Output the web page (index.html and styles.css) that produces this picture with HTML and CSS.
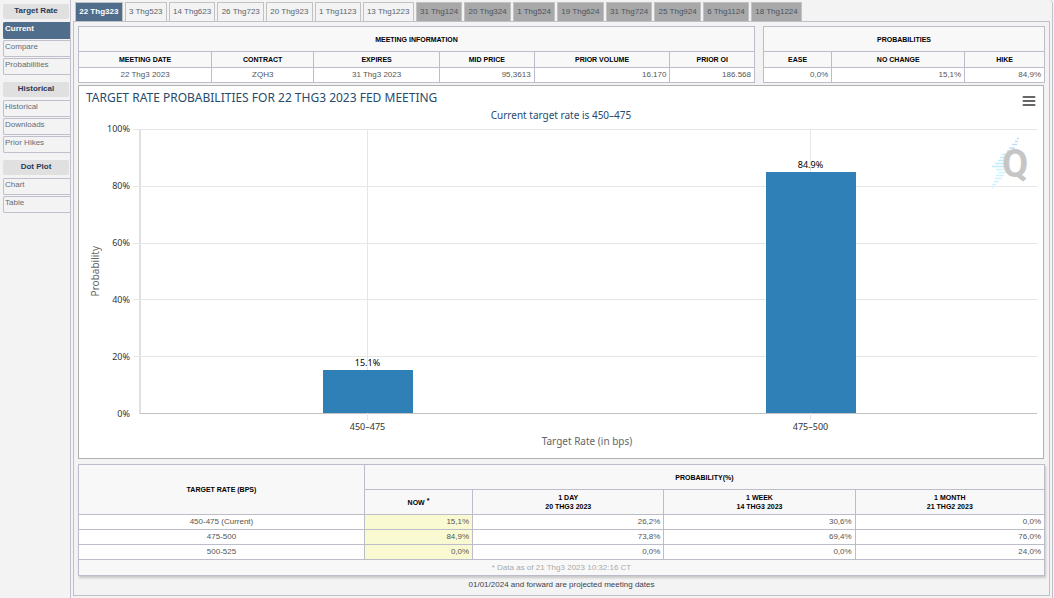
FILE: index.html
```html
<!DOCTYPE html>
<html lang="en">
<head>
<meta charset="utf-8">
<title>Target Rate Probabilities</title>
<link rel="stylesheet" href="styles.css">
</head>
<body>
<div class="app">
  <nav class="sidebar" aria-label="Sections">
    <section class="group">
      <h2 class="group-title">Target Rate</h2>
      <a class="item active" href="#current">Current</a>
      <a class="item" href="#compare">Compare</a>
      <a class="item" href="#probabilities">Probabilities</a>
    </section>
    <section class="group">
      <h2 class="group-title">Historical</h2>
      <a class="item" href="#historical">Historical</a>
      <a class="item" href="#downloads">Downloads</a>
      <a class="item" href="#hikes">Prior Hikes</a>
    </section>
    <section class="group">
      <h2 class="group-title">Dot Plot</h2>
      <a class="item" href="#chart">Chart</a>
      <a class="item" href="#table">Table</a>
    </section>
  </nav>
  <main class="main">
    <div class="tabs">
      <button class="tab active">22 Thg323</button>
      <button class="tab">3 Thg523</button>
      <button class="tab">14 Thg623</button>
      <button class="tab">26 Thg723</button>
      <button class="tab">20 Thg923</button>
      <button class="tab">1 Thg1123</button>
      <button class="tab">13 Thg1223</button>
      <button class="tab projected">31 Thg124</button>
      <button class="tab projected">20 Thg324</button>
      <button class="tab projected">1 Thg524</button>
      <button class="tab projected">19 Thg624</button>
      <button class="tab projected">31 Thg724</button>
      <button class="tab projected">25 Thg924</button>
      <button class="tab projected">6 Thg1124</button>
      <button class="tab projected">18 Thg1224</button>
    </div>
    <div class="panel">
      <div class="summary">
        <table class="grid info">
          <colgroup><col class="info-date"><col class="info-contract"><col class="info-expires"><col class="info-price"><col class="info-volume"><col></colgroup>
          <thead>
            <tr class="tall"><th colspan="6">MEETING INFORMATION</th></tr>
            <tr><th>MEETING DATE</th><th>CONTRACT</th><th>EXPIRES</th><th>MID PRICE</th><th>PRIOR VOLUME</th><th>PRIOR OI</th></tr>
          </thead>
          <tbody>
            <tr><td>22 Thg3 2023</td><td>ZQH3</td><td>31 Thg3 2023</td><td class="num">95,3613</td><td class="num">16.170</td><td class="num">186.568</td></tr>
          </tbody>
        </table>
        <table class="grid odds">
          <colgroup><col class="odds-ease"><col class="odds-same"><col></colgroup>
          <thead>
            <tr class="tall"><th colspan="3">PROBABILITIES</th></tr>
            <tr><th>EASE</th><th>NO CHANGE</th><th>HIKE</th></tr>
          </thead>
          <tbody>
            <tr><td class="num">0,0%</td><td class="num">15,1%</td><td class="num">84,9%</td></tr>
          </tbody>
        </table>
      </div>

      <section class="chart">
        <header class="chart-head">
          <h1 class="chart-title">TARGET RATE PROBABILITIES FOR 22 THG3 2023 FED MEETING</h1>
          <button class="menu" aria-label="Chart menu">
            <svg width="14" height="12" viewBox="0 0 14 12" aria-hidden="true"><path d="M1.5 2h11M1.500 6h11M1.500 10h11" stroke="#666" stroke-width="2" stroke-linecap="round"/></svg>
          </button>
        </header>
        <p class="subtitle">Current target rate is 450–475</p>
        <div class="chart-body">
          <div class="y-title">Probability</div>
          <ul class="y-ticks"><li>100%</li><li>80%</li><li>60%</li><li>40%</li><li>20%</li><li>0%</li></ul>
          <div class="plot">
            <div class="lines"><i></i><i></i><i></i><i></i><i></i></div>
            <div class="columns">
              <div class="column"><span class="value">15.1%</span><div class="bar" style="height:15.1%"></div></div>
              <div class="column"><span class="value">84.9%</span><div class="bar" style="height:84.9%"></div></div>
            </div>
            <svg class="logo" width="38" height="52" viewBox="0 0 38 52" aria-hidden="true">
              <g stroke-width="1.500" fill="none">
                <path stroke="#c0dcf5" d="M26 1.500h2M24 4.500h3M21 7.500h5M18 11h6M16 14h6"/>
                <path stroke="#c4eafc" d="M11 17.500h6M9 20.500h6M7 23.500h7M4 26.500h9M1 29.500h12"/>
                <path stroke="#cff3fc" d="M5 32.500h8M7 35.500h7M5 38.500h8M4 41.500h7M3 44.500h5M1 47.500h4M1 50.500h1"/>
              </g>
              <text class="logo-letter" x="11" y="40">Q</text>
            </svg>
          </div>
          <div class="x-labels"><span>450–475</span><span>475–500</span></div>
          <div class="x-title">Target Rate (in bps)</div>
        </div>
      </section>

      <table class="grid history">
        <colgroup><col class="hist-rate"><col class="hist-now"><col class="hist-past"><col class="hist-past"><col></colgroup>
        <thead>
          <tr class="tall"><th rowspan="2">TARGET RATE (BPS)</th><th colspan="4">PROBABILITY(%)</th></tr>
          <tr class="tall"><th>NOW <sup>*</sup></th><th>1 DAY<br>20 THG3 2023</th><th>1 WEEK<br>14 THG3 2023</th><th>1 MONTH<br>21 THG2 2023</th></tr>
        </thead>
        <tbody>
          <tr><td>450-475 (Current)</td><td class="num now">15,1%</td><td class="num">26,2%</td><td class="num">30,6%</td><td class="num">0,0%</td></tr>
          <tr><td>475-500</td><td class="num now">84,9%</td><td class="num">73,8%</td><td class="num">69,4%</td><td class="num">76,0%</td></tr>
          <tr><td>500-525</td><td class="num now">0,0%</td><td class="num">0,0%</td><td class="num">0,0%</td><td class="num">24,0%</td></tr>
        </tbody>
        <tfoot>
          <tr><td colspan="5">* Data as of 21 Thg3 2023 10:32:16 CT</td></tr>
        </tfoot>
      </table>
      <p class="note">01/01/2024 and forward are projected meeting dates</p>
    </div>
  </main>
</div>
</body>
</html>
```
FILE: styles.css
```css
* { box-sizing: border-box; }
body {
  margin: 0;
  background: #f3f3f3;
  color: #555;
  font: 8px/12px "Liberation Sans", Arial, sans-serif;
}
h1, h2, p, ul { margin: 0; padding: 0; }
button { font: inherit; color: inherit; cursor: pointer; }

.app {
  display: flex;
  min-height: 100vh;
  margin-right: 1px;
  border-right: 1px solid #c0c0d0;
  border-radius: 0 4px 0 0;
}
.sidebar {
  flex: 0 0 71px;
  padding: 4px 0 0 3px;
  border-right: 1px solid #c0c0d0;
}
.group { display: flex; flex-direction: column; gap: 1px; margin-bottom: 7px; }
.group-title {
  height: 15px;
  margin: 0 1px 2px 0;
  border-radius: 2px;
  background: #e0e0e0;
  color: #2a3a56;
  font-size: 8px;
  line-height: 13px;
  text-align: center;
}
.item {
  height: 17px;
  padding: 0 1px;
  border: 1px solid #c0c0cc;
  border-right: 0;
  border-radius: 2px 0 0 2px;
  color: #646c7a;
  line-height: 12px;
  text-decoration: none;
}
.item.active { border-color: #516d8c; background: #516d8c; color: #fff; font-weight: bold; }

.main { flex: 1; min-width: 0; padding: 2px; display: flex; flex-direction: column; }
.tabs { display: flex; gap: 2px; max-width: 729px; padding-left: 2px; }
.tab {
  flex: 1 1 auto;
  height: 19px;
  padding: 0 3px;
  border: 1px solid #c2c2c2;
  border-bottom: 0;
  background: #f3f3f3;
  color: #5b6472;
  line-height: 16px;
  white-space: nowrap;
}
.tab.active { background: #516d8c; color: #fff; font-weight: bold; }
.tab.projected { background: #a8a8a8; color: #4b5563; }
.panel { flex: 1; padding: 4px; border: 1px solid #c0c0c8; }

.summary { display: grid; grid-template-columns: 677fr 282fr; gap: 8px; }
.grid { width: 100%; border-collapse: collapse; table-layout: fixed; background: #fff; }
.grid th, .grid td { height: 15px; padding: 0 3px; border: 1px solid #bcbccb; line-height: 12px; text-align: center; }
.grid th { height: 16px; background: #f8f8f8; color: #000; font-size: 7px; line-height: 9px; }
.grid .tall th { height: 25px; }
.grid .num { text-align: right; }
.grid .now { background: #fafad2; }
.info-date { width: 19.7%; }
.info-contract { width: 15.1%; }
.info-expires { width: 18.6%; }
.info-price { width: 14%; }
.info-volume { width: 20.1%; }
.odds-ease { width: 24.3%; }
.odds-same { width: 47.3%; }
.hist-rate { width: 29.6%; }
.hist-now { width: 11.2%; }
.hist-past { width: 19.8%; }

.chart {
  margin: 2px 1px 5px 0;
  padding: 0 6px 10px;
  border: 1px solid #b0b0b0;
  background: #fff;
  color: #666;
  font: 10px/15px "Noto Sans", "Open Sans", sans-serif;
}
.chart-head { display: flex; justify-content: space-between; height: 24px; padding-left: 1px; }
.chart-title { color: #274b6d; font-size: 12px; font-weight: normal; line-height: 24px; }
.menu { display: flex; padding: 9px 1px 0; border: 0; background: none; }
.subtitle { margin-bottom: 8px; color: #274b6d; line-height: 11px; text-align: center; }
.chart-body { display: grid; grid-template-columns: 20px 32px 1fr; grid-template-rows: 285px 20px 14px; }
.y-title { justify-self: center; align-self: center; writing-mode: vertical-rl; transform: rotate(180deg); }
.y-ticks {
  display: flex;
  flex-direction: column;
  justify-content: space-between;
  margin-right: 7px;
  color: #333;
  font-size: 9px;
  list-style: none;
  text-align: right;
}
.y-ticks li { height: 0; line-height: 0; }
.plot {
  position: relative;
  display: grid;
  grid-template: 100% / 100%;
  margin-left: 2px;
  border-left: 2px solid #e0e0e0;
  border-bottom: 1px solid #c0c0c0;
}
.lines { grid-area: 1 / 1; display: grid; grid-template-rows: repeat(5, 1fr); margin-left: -8px; }
.lines i { border-top: 1px solid #e6e6e6; }
.columns { grid-area: 1 / 1; display: flex; padding: 0 5px; }
.column {
  position: relative;
  flex: 1;
  display: flex;
  flex-direction: column;
  justify-content: flex-end;
  align-items: center;
}
.column::before { content: ""; position: absolute; top: 0; bottom: -7px; border-left: 1px solid #e6e6e6; }
.value { position: relative; margin-bottom: 1px; color: #000; font-size: 9px; line-height: 12px; }
.bar { position: relative; width: 90px; background: #3080b8; }
.logo { position: absolute; top: 8px; right: 8px; }
.logo-letter { fill: #c6c6c6; font: bold 38px Roboto, sans-serif; }
.x-labels { grid-column: 3; display: flex; padding: 5px 5px 0 9px; color: #333; font-size: 9px; }
.x-labels span { flex: 1; text-align: center; }
.x-title { grid-column: 3; line-height: 14px; text-align: center; }

.history { box-shadow: 1px 2px 2px #c8c8c8; }
.history sup { font-size: 7px; line-height: 0; vertical-align: 2px; }
.history tfoot td { height: 16px; background: #f8f8f8; color: #aaa; }
.note { margin-top: 3px; color: #3c4250; text-align: center; }
```
